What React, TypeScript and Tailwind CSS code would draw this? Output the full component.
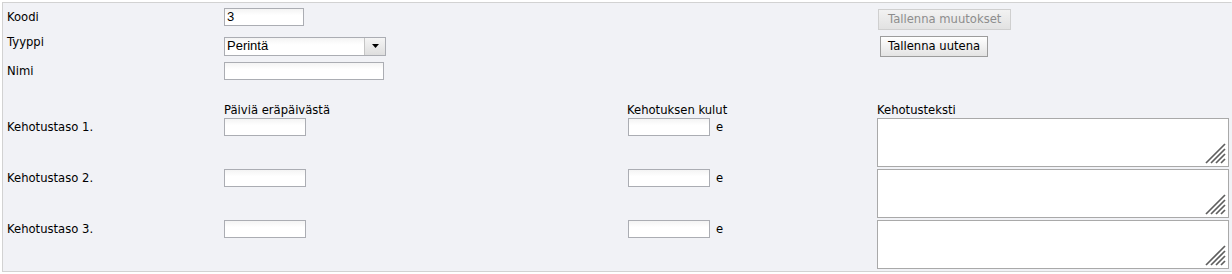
const font = { fontFamily: '"DejaVu Sans", Verdana, sans-serif' }

function TextInput({ value = '', w }: { value?: string; w: string }) {
  return (
    <input
      defaultValue={value}
      className={
        'h-[18px] border border-[#abadb3] bg-gradient-to-b from-[#f4f4f4] to-white to-40% px-[2px] text-[13px] text-black outline-none ' +
        w
      }
      style={{ fontFamily: '"Liberation Sans", Arial, sans-serif' }}
    />
  )
}

// resize grip, drawn over the textarea corner
function Grip() {
  return (
    <svg
      width="21"
      height="21"
      viewBox="0 0 21 21"
      className="pointer-events-none absolute bottom-[3px] right-[3px]"
    >
      <g stroke="#5f5f5f" strokeWidth="1.7">
        <line x1="1" y1="20" x2="20" y2="1" />
        <line x1="6" y1="20" x2="20" y2="6" />
        <line x1="11" y1="20" x2="20" y2="11" />
        <line x1="16" y1="20" x2="20" y2="16" />
      </g>
    </svg>
  )
}

function Row({ label }: { label: string }) {
  return (
    <div className="flex h-[51px] items-start">
      <div className="flex h-[20px] w-[221px] items-center pl-[4px]">{label}</div>
      <div className="w-[404px]">
        <TextInput w="w-[82px]" />
      </div>
      <div className="flex w-[249px] items-start gap-[6px]">
        <TextInput w="w-[82px]" />
        <span className="leading-[18px]">e</span>
      </div>
      <div className="relative">
        <textarea className="block h-[49px] w-[352px] resize-none border border-[#a9a9a9] bg-white outline-none" />
        <Grip />
      </div>
    </div>
  )
}

export default function App() {
  return (
    <div className="h-[274px] w-[1232px] bg-white pl-[2px] pt-[2px]" style={font}>
      <div className="h-[270px] w-[1230px] border border-b-[#d2d2d2] border-l-[#d2d2d2] border-r-transparent border-t-[#d2d2d2] bg-[#f1f2f6] text-[11.6px] text-black">
        {/* top section */}
        <div className="flex">
          <div className="w-[874px]">
            <div className="flex h-[28px] items-center">
              <div className="w-[221px] pl-[4px] pt-[2px]">Koodi</div>
              <TextInput value="3" w="w-[80px]" />
            </div>
            <div className="flex h-[30px] items-center">
              <div className="w-[221px] pb-[6px] pl-[4px]">Tyyppi</div>
              <div className="flex h-[19px] w-[162px] border border-[#abadb3] bg-white">
                <div
                  className="flex flex-1 items-center bg-gradient-to-b from-[#f4f4f4] to-white to-40% px-[2px] text-[13px]"
                  style={{ fontFamily: '"Liberation Sans", Arial, sans-serif' }}
                >
                  Perintä
                </div>
                <div className="flex w-[21px] items-center justify-center border-l border-[#c5c5c5] bg-gradient-to-b from-[#f5f5f5] to-[#dedede]">
                  <svg width="7" height="4" viewBox="0 0 7 4">
                    <path d="M0 0h7L3.5 4z" fill="#000" />
                  </svg>
                </div>
              </div>
            </div>
            <div className="flex h-[20px] items-center">
              <div className="w-[221px] pl-[4px] pt-[1px]">Nimi</div>
              <TextInput w="w-[160px]" />
            </div>
          </div>
          <div className="flex flex-col items-start gap-[6px] pt-[6px]">
            <button
              disabled
              className="ml-[1px] h-[21px] border border-[#cfcfcf] bg-gradient-to-b from-[#f2f2f2] to-[#e2e2e2] px-[9px] text-[11.6px] text-[#8d8d8d]"
            >
              Tallenna muutokset
            </button>
            <button className="ml-[3px] h-[21px] border border-[#9c9c9c] bg-gradient-to-b from-white to-[#e3e3e3] px-[7px] text-[11.6px] text-black">
              Tallenna uutena
            </button>
          </div>
        </div>

        {/* header row */}
        <div className="mt-[20px] flex h-[17px] items-center leading-[14px]">
          <div className="w-[221px]" />
          <div className="w-[403px]">Päiviä eräpäivästä</div>
          <div className="w-[250px]">Kehotuksen kulut</div>
          <div>Kehotusteksti</div>
        </div>

        <Row label="Kehotustaso 1." />
        <Row label="Kehotustaso 2." />
        <Row label="Kehotustaso 3." />
      </div>
    </div>
  )
}
